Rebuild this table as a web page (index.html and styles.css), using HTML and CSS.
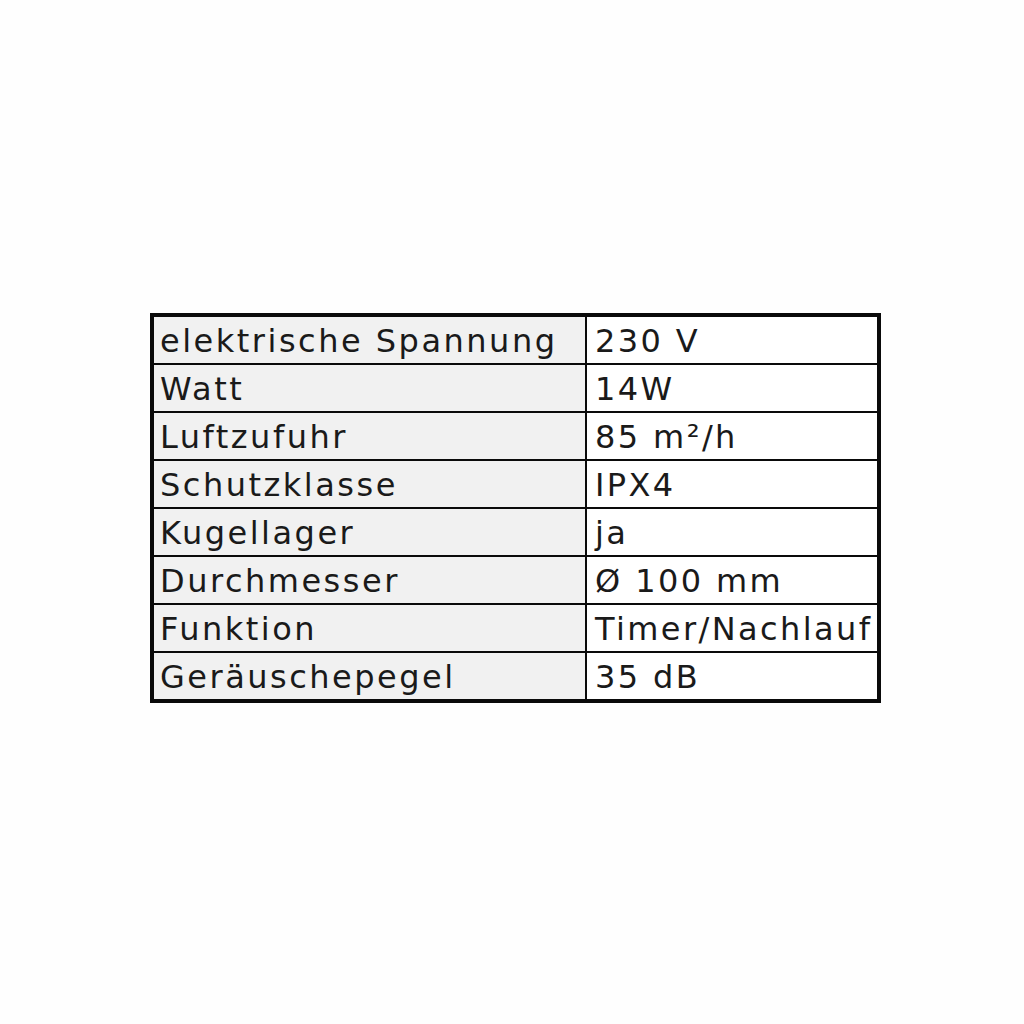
FILE: index.html
```html
<!DOCTYPE html>
<html lang="de">
<head>
<meta charset="utf-8">
<title>Technische Daten</title>
<link rel="stylesheet" href="styles.css">
</head>
<body>
<div class="page">
  <table class="specs">
    <tr><td class="k">elektrische Spannung</td><td class="v">230 V</td></tr>
    <tr><td class="k">Watt</td><td class="v">14W</td></tr>
    <tr><td class="k">Luftzufuhr</td><td class="v">85 m²/h</td></tr>
    <tr><td class="k">Schutzklasse</td><td class="v">IPX4</td></tr>
    <tr><td class="k">Kugellager</td><td class="v">ja</td></tr>
    <tr><td class="k">Durchmesser</td><td class="v">Ø 100 mm</td></tr>
    <tr><td class="k">Funktion</td><td class="v">Timer/Nachlauf</td></tr>
    <tr><td class="k">Geräuschepegel</td><td class="v">35 dB</td></tr>
  </table>
</div>
</body>
</html>
```
FILE: styles.css
```css
html, body {
  margin: 0;
  padding: 0;
  background: #fefefe;
}
.page {
  padding: 313px 0 0 150px;
  height: 711px;
  box-sizing: border-box;
}
.specs {
  border: 4px solid #0a0a0a;
  border-collapse: separate;
  border-spacing: 0;
  table-layout: fixed;
  width: 731px;
  font-family: "DejaVu Sans", Verdana, sans-serif;
  font-size: 32px;
  letter-spacing: 2.5px;
  color: #1a1a1a;
}
.specs td {
  height: 46px;
  padding: 2px 0 0 0;
  box-sizing: border-box;
  line-height: 44px;
  white-space: nowrap;
  vertical-align: top;
  overflow: hidden;
}
.specs tr + tr td {
  border-top: 2px solid #0a0a0a;
  height: 48px;
}
.specs .k {
  width: 431px;
  background: #f1f1f1;
  padding-left: 6px;
}
.specs .v {
  width: 292px;
  background: #ffffff;
  border-left: 2px solid #0a0a0a;
  padding-left: 8px;
  letter-spacing: 2.4px;
}
```
